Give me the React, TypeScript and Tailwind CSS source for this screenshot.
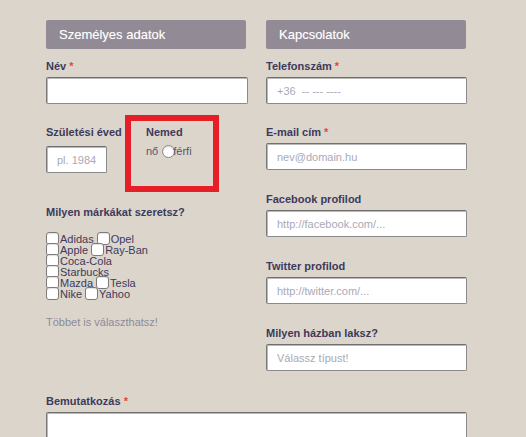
import React from "react";

// Registration form: personal data + contacts, two columns on a beige page

const labelCls = "block text-[11px] leading-[15px] font-bold text-[#3c3a5c]";
const inputCls =
  "block h-[27px] bg-white border border-[#8a8a8a] border-t-[#6f6f6f] border-l-[#7a7a7a] rounded-[2px] shadow-[inset_1px_1px_0_#b9b9b9] text-[11px] text-[#333] placeholder:text-[#a9a9b6] px-[10px] outline-none";

function Req() {
  return <span className="text-[#e8453c]"> *</span>;
}

function Header({ title }: { title: string }) {
  return (
    <div className="w-[200px] h-[29px] rounded-[2px] bg-[#928a94] flex items-center pl-[13px] text-[13px] text-white [text-shadow:0_0_1px_rgba(255,255,255,0.4)]">
      {title}
    </div>
  );
}

function Field({
  label,
  required,
  placeholder,
  className = "",
}: {
  label: string;
  required?: boolean;
  placeholder?: string;
  className?: string;
}) {
  return (
    <div className={className}>
      <label className={labelCls}>
        {label}
        {required && <Req />}
      </label>
      <input className={`${inputCls} mt-[3px] w-[201px]`} placeholder={placeholder} />
    </div>
  );
}

function Box() {
  return (
    <span className="inline-block shrink-0 w-[13px] h-[13px] bg-white border border-[#7b7b7b] rounded-[3px] shadow-[inset_0_1px_1px_rgba(0,0,0,0.12)]" />
  );
}

const brands: string[][] = [
  ["Adidas", "Opel"],
  ["Apple", "Ray-Ban"],
  ["Coca-Cola"],
  ["Starbucks"],
  ["Mazda", "Tesla"],
  ["Nike", "Yahoo"],
];

export default function App() {
  return (
    <div className="w-[526px] min-h-[437px] overflow-hidden bg-[#dcd5cb] pt-5 pl-[46px] font-['Liberation_Sans',Arial,sans-serif]">
      <div className="flex gap-[18px]">
        {/* Left column */}
        <div className="w-[202px]">
          <Header title="Személyes adatok" />
          <div className="mt-[10px]">
            <label className={labelCls}>
              Név
              <Req />
            </label>
            <input className={`${inputCls} mt-[3px] w-[202px]`} />
          </div>

          <div className="mt-[11px] flex items-start">
            <div className="w-[79px] pt-[10px]">
              <label className={`${labelCls} whitespace-nowrap`}>Születési éved</label>
              <input
                className={`${inputCls} mt-[6px] w-[61px] h-[26px] text-center px-0`}
                placeholder="pl. 1984"
              />
            </div>
            <div className="w-[94px] h-[77px] border-[6px] border-[#e61e28] pt-[4px] pl-[15px]">
              <div className={labelCls}>Nemed</div>
              <div className="mt-[5px] flex items-center h-[13px] text-[11px] text-[#55566e]">
                <span>nő</span>
                <span className="ml-[4px] -mr-[2px] inline-block w-[13px] h-[13px] rounded-full bg-white border border-[#8a8a8a] shadow-[inset_0_1px_2px_rgba(0,0,0,0.15)]" />
                <span>férfi</span>
              </div>
            </div>
          </div>

          <div className="mt-[13px]">
            <div className={labelCls}>Milyen márkákat szeretsz?</div>
            <div className="mt-[14px] text-[11px] leading-[11px] text-[#3c3a5c]">
              {brands.map((row, i) => (
                <div key={i} className="flex items-center h-[11px]">
                  {row.map((b, j) => (
                    <React.Fragment key={b}>
                      <span className={j > 0 ? "ml-[3px]" : ""}>
                        <Box />
                      </span>
                      <span className="ml-[1px]">{b}</span>
                    </React.Fragment>
                  ))}
                </div>
              ))}
            </div>
            <div className="mt-[15px] text-[11px] leading-[15px] text-[#8b8c9a]">
              Többet is választhatsz!
            </div>
          </div>
        </div>

        {/* Right column */}
        <div className="w-[201px]">
          <Header title="Kapcsolatok" />
          <Field className="mt-[10px]" label="Telefonszám" required placeholder="+36  -- --- ----" />
          <Field className="mt-[21px]" label="E-mail cím" required placeholder="nev@domain.hu" />
          <Field className="mt-[22px]" label="Facebook profilod" placeholder="http://facebook.com/..." />
          <Field className="mt-[22px]" label="Twitter profilod" placeholder="http://twitter.com/..." />
          <Field className="mt-[22px]" label="Milyen házban laksz?" placeholder="Válassz típust!" />
        </div>
      </div>

      <div className="mt-[23px] w-[421px]">
        <label className={labelCls}>
          Bemutatkozás
          <Req />
        </label>
        <textarea className={`${inputCls} mt-[3px] w-[421px] h-[70px] resize-none`} />
      </div>
    </div>
  );
}
